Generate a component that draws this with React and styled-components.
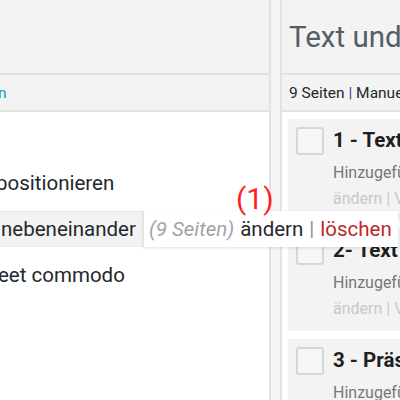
import React from 'react';
import styled, { createGlobalStyle } from 'styled-components';

const GlobalStyle = createGlobalStyle`
  html, body {
    margin: 0;
    padding: 0;
    background: #fff;
    overflow: hidden;
  }
  body {
    font-family: Roboto, "Liberation Sans", Arial, sans-serif;
    color: #23282d;
  }
`;

const leftRows = [
  { id: 0, text: '', offset: 0 },
  { id: 1, text: 'positionieren', offset: -4 },
  { id: 2, text: 'nebeneinander', offset: 1, hovered: true },
  { id: 3, text: 'eet commodo', offset: -2 },
];

const pages = [
  { id: 1, title: '1 - Text' },
  { id: 2, title: '2- Text' },
  { id: 3, title: '3 - Präs' },
];

// Seitenübersicht: links die Vorlagenliste, rechts die Seiten der Gruppe
const App = () => (
  <Page>
    <GlobalStyle />
    <LeftPanel>
      <PanelHeader />
      <SubBar>
        <LinkText>n</LinkText>
      </SubBar>
      <RowList>
        {leftRows.map((row) => (
          <Row key={row.id} $hovered={row.hovered}>
            <RowTitle $offset={row.offset}>{row.text}</RowTitle>
            {row.hovered && (
              <>
                <Marker>(1)</Marker>
                <Actions>
                  <Count>(9 Seiten)</Count>
                  <EditLink>ändern</EditLink>
                  <Sep>|</Sep>
                  <DeleteLink>löschen</DeleteLink>
                </Actions>
              </>
            )}
          </Row>
        ))}
      </RowList>
    </LeftPanel>
    <Gutter />
    <RightPanel>
      <PanelHeader>
        <Title>Text und</Title>
      </PanelHeader>
      <SubBar>
        <Meta>9 Seiten <MetaSep>|</MetaSep> Manuell</Meta>
      </SubBar>
      <CardList>
        {pages.map((page) => (
          <Card key={page.id}>
            <Check />
            <CardBody>
              <CardTitle>{page.title}</CardTitle>
              <CardInfo>Hinzugefügt</CardInfo>
              <CardActions>ändern | Vorschau</CardActions>
            </CardBody>
          </Card>
        ))}
      </CardList>
    </RightPanel>
  </Page>
);

const Page = styled.div`
  display: flex;
  width: 400px;
  height: 400px;
  overflow: hidden;
`;

const LeftPanel = styled.div`
  width: 269px;
  flex-shrink: 0;
  display: flex;
  flex-direction: column;
  background: #fff;
`;

const PanelHeader = styled.div`
  height: 73px;
  flex-shrink: 0;
  background: #f3f3f3;
  border-bottom: 2px solid #e2e2e2;
  display: flex;
  align-items: center;
  padding-left: 7px;
  white-space: nowrap;
`;

const SubBar = styled.div`
  height: 35px;
  flex-shrink: 0;
  background: #f3f3f3;
  border-bottom: 2px solid #e2e2e2;
  display: flex;
  align-items: center;
  white-space: nowrap;
`;

const LinkText = styled.span`
  font-size: 15.5px;
  color: #00a0d2;
  margin-left: -2px;
`;

const RowList = styled.div`
  display: flex;
  flex-direction: column;
  gap: 10px;
  padding-top: 7px;
`;

const Row = styled.div`
  position: relative;
  height: 36px;
  display: flex;
  align-items: center;
  background: ${(p) => (p.$hovered ? '#f3f3f3' : 'transparent')};
  border-top: 1px solid ${(p) => (p.$hovered ? '#e6e6e6' : 'transparent')};
  border-bottom: 1px solid ${(p) => (p.$hovered ? '#ececec' : 'transparent')};
  box-sizing: border-box;
`;

const RowTitle = styled.span`
  font-size: 20.5px;
  color: #23282d;
  margin-left: ${(p) => p.$offset}px;
  white-space: nowrap;
`;

const Marker = styled.span`
  position: absolute;
  left: 236px;
  top: -31px;
  font-size: 30px;
  color: #ff1f1f;
  z-index: 3;
`;

const Actions = styled.div`
  position: absolute;
  left: 143px;
  top: -1px;
  width: 255px;
  height: 36px;
  box-sizing: border-box;
  background: #fff;
  border-left: 1px solid #e2e2e2;
  box-shadow: 0 1px 3px rgba(0, 0, 0, 0.12);
  display: flex;
  align-items: center;
  gap: 6px;
  padding-left: 5px;
  font-size: 20.5px;
  white-space: nowrap;
  z-index: 2;
`;

const Count = styled.span`
  font-style: italic;
  color: #a0a5aa;
`;

const EditLink = styled.span`
  color: #23282d;
`;

const Sep = styled.span`
  color: #8a8f94;
`;

const DeleteLink = styled.span`
  color: #c0262c;
`;

const Gutter = styled.div`
  width: 9px;
  flex-shrink: 0;
  background: #f4f4f4;
  border-left: 2px solid #e3e3e3;
  border-right: 2px solid #e3e3e3;
`;

const RightPanel = styled.div`
  flex: 1;
  min-width: 0;
  display: flex;
  flex-direction: column;
  background: #fff;
`;

const Title = styled.h1`
  margin: 0;
  font-size: 29.5px;
  font-weight: 400;
  color: #555d66;
`;

const Meta = styled.span`
  font-size: 15.5px;
  color: #23282d;
  padding-left: 7px;
`;

const MetaSep = styled.span`
  color: #3c3f7a;
`;

const CardList = styled.div`
  display: flex;
  flex-direction: column;
  gap: 8px;
  padding: 7px 0 0 6px;
`;

const Card = styled.div`
  height: 102px;
  flex-shrink: 0;
  background: #f3f3f3;
  display: flex;
  gap: 9px;
  padding: 8px 0 0 8px;
  box-sizing: border-box;
  white-space: nowrap;
`;

const Check = styled.div`
  width: 28px;
  height: 28px;
  flex-shrink: 0;
  box-sizing: border-box;
  border: 2px solid #d6d6d6;
  border-radius: 3px;
  background: #f6f6f6;
`;

const CardBody = styled.div`
  display: flex;
  flex-direction: column;
`;

const CardTitle = styled.div`
  font-size: 20.5px;
  font-weight: 700;
  color: #1e1e1e;
  line-height: 26px;
`;

const CardInfo = styled.div`
  font-size: 16px;
  color: #777;
  margin-top: 9px;
  line-height: 22px;
`;

const CardActions = styled.div`
  font-size: 16px;
  color: #c8c8c8;
  margin-top: 4px;
  line-height: 22px;
`;

export default App;
